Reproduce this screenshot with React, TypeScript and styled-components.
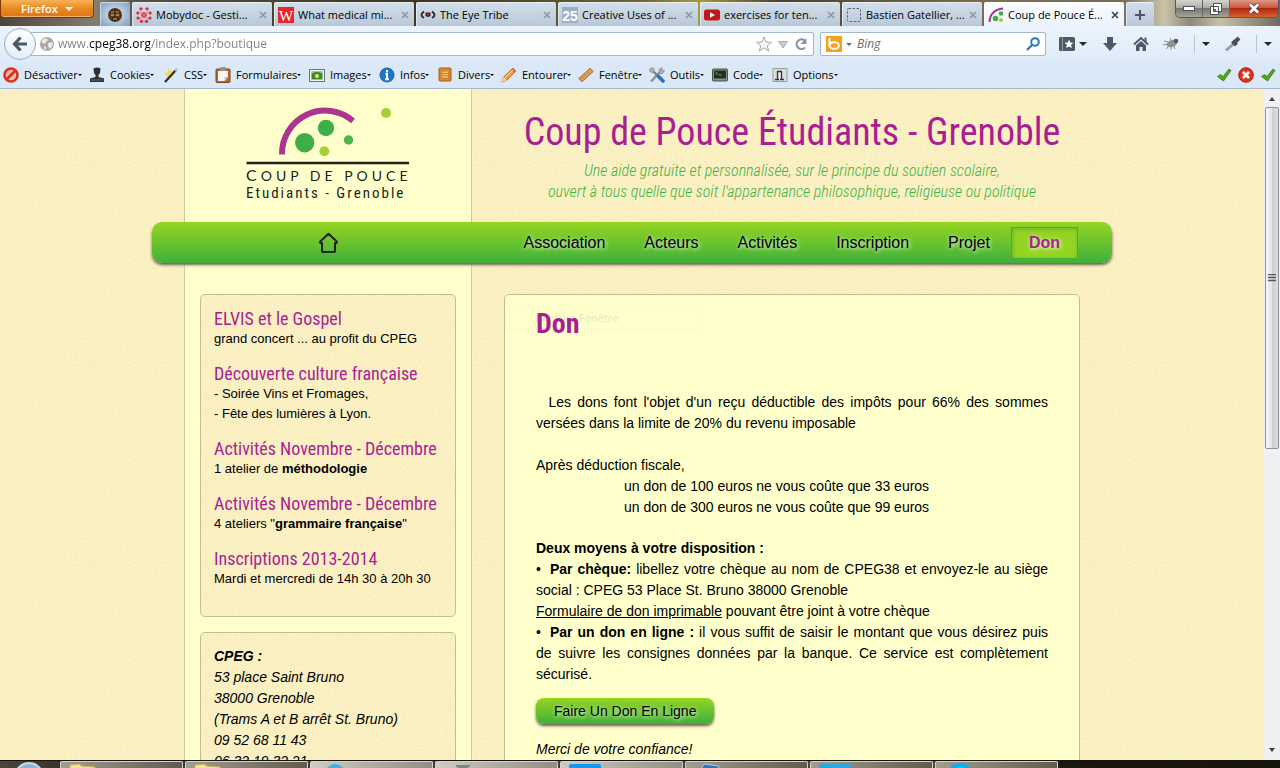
import React from "react";
import styled, { createGlobalStyle, css } from "styled-components";

const ui = `"Open Sans", "Noto Sans", sans-serif`;
const sans = `"Liberation Sans", Arial, sans-serif`;
const narrow = `"Roboto Condensed", "Open Sans Condensed", "DejaVu Sans Condensed", sans-serif`;

const grain = `url("data:image/svg+xml,%3Csvg xmlns='http://www.w3.org/2000/svg' width='200' height='200'%3E%3Cfilter id='n' x='0' y='0' width='100%25' height='100%25'%3E%3CfeTurbulence type='fractalNoise' baseFrequency='.55' numOctaves='2' stitchTiles='stitch'/%3E%3CfeColorMatrix values='0 0 0 0 .78 0 0 0 0 .68 0 0 0 0 .42 .6 0 0 0 -.18'/%3E%3C/filter%3E%3Crect width='200' height='200' filter='url(%23n)'/%3E%3C/svg%3E")`;

const paper = css`
  background-color: #fdf3c4;
  background-image: ${grain};
`;

const Global = createGlobalStyle`
  * { box-sizing: border-box; }
  body { margin: 0; font-family: ${sans}; color: #000; overflow: hidden; }
  button, input { font: inherit; color: inherit; margin: 0; padding: 0; border: 0; background: none; }
  h1, h2, h3, p, ul, address { margin: 0; padding: 0; }
  svg { display: block; flex: none; }
`;

const Window = styled.div`
  height: 100vh;
  display: flex;
  flex-direction: column;
  overflow: hidden;
`;

/* ---------- title bar and tabs ---------- */

const TitleBar = styled.div`
  height: 26px;
  flex: none;
  display: flex;
  align-items: flex-end;
  gap: 2px;
  font: 12px/16px ${ui};
  background: linear-gradient(90deg, #4c443b 0, #857d6e 96px, #58503f 140px, #3c3624 420px, #6c6533 640px, #a59c3f 700px, #4b4330 780px, #7a7250 1000px, #746a56 1120px, #c9c4a8 1164px, #8d8a7c 1190px, #c8c1a6 1220px, #6f6a60 1280px);
`;

const FirefoxButton = styled.button`
  align-self: flex-start;
  width: 94px;
  height: 18px;
  margin-right: 4px;
  display: flex;
  align-items: center;
  justify-content: center;
  gap: 7px;
  color: #fff;
  font-weight: 600;
  font-size: 11px;
  border: 1px solid #7a3a06;
  border-top: 0;
  border-radius: 0 0 4px 4px;
  background: linear-gradient(#f7b257, #e98a22 50%, #de7410);
  box-shadow: inset 0 -1px 0 #f2b06a;
`;

const Tab = styled.button<{ $active?: boolean; $pinned?: boolean }>`
  flex: 0 1 ${(p) => (p.$pinned ? "30px" : "140px")};
  min-width: 28px;
  height: 24px;
  display: flex;
  align-items: center;
  justify-content: ${(p) => (p.$pinned ? "center" : "flex-start")};
  gap: 4px;
  padding: 2px 5px 0 4px;
  text-align: left;
  white-space: nowrap;
  border-radius: 2px 2px 0 0;
  background: ${(p) =>
    p.$active ? "linear-gradient(#fbfdff, #eaf3fc)" : p.$pinned ? "radial-gradient(#d9e8f5, #7f9dbc)" : "linear-gradient(#d3dfeb, #b9c8d8)"};
  box-shadow: inset 1px 1px 0 rgba(255, 255, 255, 0.5);
`;

const TabLabel = styled.span`
  flex: 1;
  min-width: 0;
  overflow: hidden;
  font-size: 11px;
`;

const NewTab = styled(Tab)`
  flex: 0 0 26px;
  justify-content: center;
`;

const Caption = styled.div`
  align-self: flex-start;
  margin: 0 1px 0 auto;
  height: 18px;
  display: flex;
  border: 1px solid #56585a;
  border-top: 0;
  border-radius: 0 0 5px 5px;
  overflow: hidden;
`;

const CaptionButton = styled.button<{ $close?: boolean }>`
  width: ${(p) => (p.$close ? "48px" : "27px")};
  display: grid;
  place-items: center;
  border-right: ${(p) => (p.$close ? "0" : "1px solid #66686a")};
  background: ${(p) => (p.$close ? "linear-gradient(#dc9a86, #cc5237 48%, #b0270d 50%, #d5622f)" : "linear-gradient(#d5d4cf, #aaa9a2 48%, #77766f 50%, #a5a498)")};
`;

/* ---------- navigation bar ---------- */

const NavBar = styled.div`
  height: 36px;
  flex: none;
  display: flex;
  align-items: center;
  padding: 0 8px 0 4px;
  background: linear-gradient(#ebf4fd, #dfebf8);
`;

const BackButton = styled.button`
  width: 32px;
  height: 32px;
  margin-right: -6px;
  z-index: 1;
  display: grid;
  place-items: center;
  border: 1px solid #98aac3;
  border-radius: 50%;
  background: linear-gradient(#fff, #e2edf8);
`;

const Field = styled.label<{ $w?: string }>`
  flex: ${(p) => (p.$w ? `0 1 ${p.$w}` : "1")};
  height: 24px;
  min-width: 0;
  display: flex;
  align-items: center;
  gap: 4px;
  padding: 0 5px;
  border: 1px solid #a6b6ca;
  border-radius: 2px;
  background: #fff;
  font: 12px/16px ${ui};
`;

const UrlField = styled(Field)`
  margin-right: 6px;
  padding: 0 5px 0 9px;
`;

const UrlInput = styled.input`
  flex: 1;
  min-width: 0;
  outline: 0;
  font-size: 12px;
  -webkit-text-fill-color: transparent;
  background: linear-gradient(90deg, #808080 31px, #000 31px, #000 92px, #808080 92px);
  -webkit-background-clip: text;
  background-clip: text;
`;

const SearchInput = styled.input`
  flex: 1;
  min-width: 0;
  outline: 0;
  padding-left: 1px;
  font-size: 12px;
  &::placeholder { color: #6b6b6b; font-style: italic; opacity: 1; }
`;

const Tools = styled.div`
  flex: none;
  width: 226px;
  padding-left: 13px;
  display: flex;
  align-items: center;
  justify-content: space-between;
`;

const IconButton = styled.button`
  display: flex;
  align-items: center;
  gap: 4px;
`;

const Rule = styled.span`
  width: 1px;
  height: 18px;
  margin-right: 3px;
  background: #b6c5d6;
`;

/* ---------- developer toolbar ---------- */

const DevBar = styled.div`
  height: 27px;
  flex: none;
  display: flex;
  align-items: center;
  justify-content: space-between;
  padding: 0 4px 0 3px;
  font: 11px/16px ${ui};
  background: #dbe8f7;
  border-bottom: 1px solid #a5b8d2;
`;

const DevItems = styled.div`
  display: grid;
  grid-template-columns: 86px 74px 52px 94px 70px 58px 64px 77px 71px 63px 60px 70px;
`;

const DevItem = styled.button`
  display: flex;
  align-items: center;
  white-space: nowrap;
  svg:first-child { margin-right: 5px; }
`;

const Status = styled.div`
  display: flex;
  gap: 6px;
`;

/* ---------- viewport ---------- */

const Viewport = styled.div`
  flex: 1;
  min-height: 0;
  display: flex;
`;

const Page = styled.div`
  flex: 1;
  min-width: 0;
  overflow: hidden;
  ${paper}
`;

const Wrap = styled.div`
  width: 960px;
  max-width: 100%;
  margin: 0 auto;
`;

const Columns = styled.div`
  display: grid;
  grid-template-columns: 288px 1fr;
  column-gap: 32px;
  padding: 0 32px;
`;

const LeftStrip = styled.div`
  padding: 0 15px;
  background: #ffffcc;
  border: solid #cfcba4;
  border-width: 0 1px;
`;

const LogoStrip = styled(LeftStrip)`
  height: 133px;
  padding: 17px 0 0 59px;
`;

const Heading = styled.header`
  padding-top: 18px;
  text-align: center;
`;

const SiteTitle = styled.h1`
  font: 400 38px/50px ${narrow};
  color: #a91f92;
  white-space: nowrap;
`;

const Tagline = styled.p`
  padding-top: 3px;
  font: italic 300 16px/21px ${narrow};
  color: #3fb244;
  white-space: nowrap;
`;

const green = css`
  background: linear-gradient(#95d522, #3fb03a);
  box-shadow: 0 2px 3px #6b5c4c;
  text-shadow: 1px 1px 4px #fff;
`;

const Menu = styled.nav`
  position: relative;
  height: 41px;
  display: flex;
  align-items: center;
  padding: 0 34px 0 166px;
  border-radius: 10px;
  ${green}
`;

const MenuList = styled.ul`
  margin-left: auto;
  display: flex;
  gap: 3px;
  list-style: none;
`;

const MenuLink = styled.a<{ $active?: boolean }>`
  display: block;
  padding: 0 17px;
  font-size: 16px;
  line-height: 30px;
  color: #000;
  text-decoration: none;
  border: 1px solid transparent;
  ${(p) =>
    p.$active &&
    css`
      color: #a91f92;
      font-weight: bold;
      background: #95d522;
      border-color: #3fb03a;
      box-shadow: inset 1px 1px 5px #6fb030;
    `}
`;

const box = css`
  border: 1px solid #c3bd96;
  border-radius: 5px;
`;

const SideBox = styled.section`
  ${box}
  ${paper}
  padding: 13px;
  margin-bottom: 15px;
`;

const Sidebar = styled(LeftStrip)`
  padding-top: 31px;
`;

const News = styled.article`
  margin-bottom: 14px;
  font-size: 13px;
  line-height: 20px;
  white-space: nowrap;
`;

const NewsTitle = styled.h3`
  font: 400 18px/21px ${narrow};
  color: #a91f92;
`;

const Address = styled.address`
  font-size: 14px;
  line-height: 21px;
`;

const Main = styled.main`
  ${box}
  position: relative;
  margin-top: 31px;
  padding: 12px 31px 40px;
  background: #ffffcc;
  font-size: 14px;
  line-height: 21px;
`;

const MainTitle = styled.h2`
  position: relative;
  margin-bottom: 51px;
  font: bold 28px/34px ${narrow};
  color: #a91f92;
`;

const Ghost = styled.div`
  position: absolute;
  top: 11px;
  left: 0;
  width: 194px;
  padding-left: 29px;
  font: 11px/21px ${ui};
  color: #e8e8ba;
  border: 1px solid #fafac6;
`;

const Para = styled.p<{ $gap?: boolean }>`
  text-align: justify;
  margin-bottom: ${(p) => (p.$gap ? "21px" : "0")};
`;

const Sums = styled.p`
  padding-left: 88px;
  margin-bottom: 20px;
`;

const Bullet = styled.span`
  padding-right: 4px;
`;

const InkLink = styled.a`
  color: #000;
`;

const DonateButton = styled.button`
  display: block;
  height: 26px;
  margin: 13px 0 15px;
  padding: 0 18px;
  border-radius: 8px;
  font-size: 14px;
  white-space: nowrap;
  ${green}
`;

/* ---------- scroll bar and task bar ---------- */

const ScrollBar = styled.div`
  flex: none;
  width: 16px;
  display: flex;
  flex-direction: column;
  align-items: center;
  padding: 7px 0;
  background: #f0f0f2;
`;

const Thumb = styled.div`
  width: 14px;
  flex: 0 0 52%;
  margin: 5px 0 auto;
  display: grid;
  place-items: center;
  border: 1px solid #8f9399;
  border-radius: 2px;
  background: linear-gradient(90deg, #f6f6f7, #e4e5e8 48%, #cfd0d4 52%, #dcdde0);
`;

const TaskBar = styled.footer`
  flex: none;
  height: 8px;
  display: flex;
  gap: 2px;
  border-top: 1px solid #14130d;
  background: linear-gradient(90deg, #4b4638, #38342a 60px, #4d493c 1050px, #1b1811 1060px, #17140e);
  overflow: hidden;
`;

const Orb = styled.div`
  flex: none;
  width: 58px;
  display: grid;
  justify-content: center;
`;

const Task = styled.div<{ $dark?: boolean }>`
  flex: 0 1 123px;
  padding: 1px 0 0 8px;
  border: 1px solid #d6d3c8;
  border-bottom: 0;
  border-radius: 2px 2px 0 0;
  overflow: hidden;
  background: ${(p) => (p.$dark ? "linear-gradient(90deg, #a39d90, #625a4c)" : "linear-gradient(90deg, #cfccc2, #b0aca2 50%, #938e82)")};
`;

/* ---------- drawings ---------- */

const Svg = ({ w = 16, h = 16, vb, children }: { w?: number; h?: number; vb?: string; children: React.ReactNode }) => (
  <svg width={w} height={h} viewBox={vb || `0 0 ${w} ${h}`} aria-hidden="true">
    {children}
  </svg>
);

const Caret = ({ w = 8, c = "#1f2a36" }: { w?: number; c?: string }) => (
  <Svg w={w} h={w / 2} vb="0 0 8 4">
    <path d="M0 0h8L4 4z" fill={c} />
  </Svg>
);

const Cross = ({ c }: { c: string }) => (
  <Svg w={8} h={8}>
    <path d="M1 1l6 6M7 1L1 7" stroke={c} strokeWidth="1.7" />
  </Svg>
);

const favicons: Record<string, React.ReactNode> = {
  cookie: (
    <>
      <circle cx="8" cy="8" r="7" fill="#54351a" />
      <circle cx="8" cy="8" r="4.5" fill="#8a6033" />
      <path d="M3 6h10M4 10h8M8 2v12M5 3l1 3M11 3l-1 3M5 13l1-3M11 13l-1-3" stroke="#2c1a0c" />
      <path d="M4 5h3M9 5h3M4 8h3M9 8h3M6 12h4" stroke="#c79a5e" />
    </>
  ),
  moby: (
    <g fill="#e8262f">
      <circle cx="8" cy="8" r="2.8" />
      <path d="M8 8L3 4M8 8l5-4M8 8l-5 5M8 8l5 5" stroke="#f07a80" />
      <circle cx="5" cy="1.8" r="1.6" /><circle cx="11" cy="1.8" r="1.6" />
      <circle cx="1.8" cy="6" r="1.6" /><circle cx="14.2" cy="6" r="1.6" />
      <circle cx="2" cy="11" r="1.6" /><circle cx="14" cy="11" r="1.6" />
      <circle cx="5.5" cy="14.3" r="1.6" /><circle cx="10.5" cy="14.3" r="1.6" />
    </g>
  ),
  what: (
    <>
      <path d="M0 0h16v16H0z" fill="#e8252c" />
      <text x="8" y="13.5" textAnchor="middle" fontSize="15" fontFamily="Liberation Serif, serif" fill="#fff">W</text>
    </>
  ),
  eye: (
    <>
      <path d="M5.5 5.500h5v3q-2.500 3-5 0z" fill="#2b2b2b" />
      <circle cx="8" cy="7.500" r="1.100" fill="#d33" />
      <path d="M4 4.500Q-1 8 4 11M12 4.500Q17 8 12 11" fill="none" stroke="#2b2b2b" strokeWidth="1.900" />
    </>
  ),
  n25: (
    <>
      <path d="M0 0h16v16H0z" fill="#9cafc7" />
      <text x="8" y="13.5" textAnchor="middle" fontSize="14" fontWeight="bold" fontFamily="Liberation Sans, sans-serif" fill="#fff">25</text>
    </>
  ),
  tube: (
    <>
      <rect y="2.5" width="16" height="11" rx="2.5" fill="#c4161c" />
      <path d="M6 5.200v5.600L11 8z" fill="#fff" />
    </>
  ),
  blank: <rect x="1.5" y="1.5" width="13" height="13" rx="1" fill="none" stroke="#59646f" strokeDasharray="2.5 1.5" />,
  coup: (
    <>
      <path d="M1.500 15Q2 3 15 1.500" fill="none" stroke="#a9338f" strokeWidth="2" />
      <circle cx="7.5" cy="11.500" r="2.800" fill="#3fae49" /><circle cx="13" cy="6.500" r="2.300" fill="#3fae49" />
      <circle cx="13" cy="13" r="2" fill="#a4cf38" />
    </>
  ),
};

const devIcons: Record<string, React.ReactNode> = {
  disable: (
    <>
      <circle cx="8" cy="8" r="6.500" fill="#f7b9ac" stroke="#d8321c" strokeWidth="2.600" />
      <path d="M3.500 12.500l9-9" stroke="#d8321c" strokeWidth="2.800" />
    </>
  ),
  user: (
    <>
      <path d="M4.500 1.500Q8-.500 11.500 1.500L11 6 9.500 8v2l5.500 1.500V15H1v-3.500L6.500 10V8L5 6z" fill="#2e3133" />
      <path d="M2 13h12" stroke="#6a6e70" />
    </>
  ),
  wand: (
    <>
      <path d="M6 0l1.500 4L12 3.500 9 7l2 4-4-1.500L4 13V8.500L0 6.500l4.500-1z" fill="#ffd84a" />
      <path d="M2 15L13 3" stroke="#333" strokeWidth="2.300" />
      <path d="M12 4l2-2" stroke="#bbb" strokeWidth="2" />
    </>
  ),
  clip: (
    <>
      <rect x="1" y="2" width="14" height="13.500" rx="1" fill="#b5682a" stroke="#80451a" />
      <path d="M3 4h10v6l-3.500 4H3z" fill="#f8f7f2" />
      <path d="M13 10H9.500v4z" fill="#c9c4b8" />
      <rect x="5" y="0" width="6" height="4" rx="1" fill="#8e9092" />
    </>
  ),
  image: (
    <>
      <rect x=".5" y="2.500" width="15" height="12" fill="#f4f4ef" stroke="#6f756d" />
      <path d="M2.500 4.500h11v8h-11z" fill="#3f8a2b" />
      <path d="M2.500 6.500Q8 3 13.500 6.500v-2h-11z" fill="#a7cfe0" />
      <circle cx="8" cy="9" r="2" fill="#e9e46c" />
    </>
  ),
  info: (
    <>
      <circle cx="8" cy="8" r="7" fill="#1c78c4" stroke="#1260a5" />
      <path d="M8 3v2.500M6.500 7H8v5M6 12.300h4" stroke="#fff" strokeWidth="2" fill="none" />
    </>
  ),
  misc: (
    <>
      <rect x="2" y="1" width="12" height="13" rx="1" fill="#d98a2b" stroke="#a45d12" />
      <path d="M4.500 4h7v7h-7zM4.500 6.500h7M4.500 8.500h7" fill="#f4bd6c" stroke="#c98436" />
    </>
  ),
  pencil: (
    <>
      <path d="M1 15l1.500-5L12 1l3 3-9.500 9.500z" fill="#f19a38" stroke="#b4631a" strokeWidth=".8" />
      <path d="M12 1l3 3-2 2-3-3z" fill="#d66" />
      <path d="M4 11l8-8" stroke="#ffdc9c" />
      <path d="M1 15l1.500-5 3 3.500z" fill="#f5deb5" />
    </>
  ),
  ruler: (
    <>
      <path d="M.8 11.500L12 1.200l3.200 3.300L4 14.800z" fill="#dd9a55" stroke="#a9642a" strokeWidth=".9" />
      <path d="M3 10l1.500 1.500M6 7.200l1.500 1.500M9 4.500L10.500 6" stroke="#c07c40" />
    </>
  ),
  tools: (
    <>
      <path d="M2 14.500L12 4" stroke="#8b9094" strokeWidth="2.400" />
      <path d="M10 2.500l3-2v3l2.500 0-2 3h-3z" fill="#aeb3b6" stroke="#777" strokeWidth=".6" />
      <path d="M4 4l5 5" stroke="#777c80" strokeWidth="2.200" />
      <path d="M1 1.500L4.500.8 5.500 4 4 5.800.8 4.500z" fill="#aeb3b6" stroke="#777" strokeWidth=".6" />
      <path d="M9.500 9.500l4.500 4.500" stroke="#2e70bd" strokeWidth="3.600" strokeLinecap="round" />
    </>
  ),
  code: (
    <>
      <rect x=".5" y="2" width="15" height="12" rx="1" fill="#8a938b" stroke="#4a504b" />
      <path d="M2 3.500h12v8H2z" fill="#1d3322" />
      <path d="M3.500 5l2 1.500-2 1M6.500 8h3" stroke="#6f9f70" fill="none" />
    </>
  ),
  options: (
    <>
      <path d="M1 1.500h14v13H1z" fill="#dededc" stroke="#9a9a98" />
      <path d="M5.500 12V4.500h4V12M3 12.500h4M8 12.500h4" fill="none" stroke="#333" strokeWidth="1.300" />
      <path d="M7.500 6v5" stroke="#fff" />
    </>
  ),
};

const Check = () => (
  <Svg>
    <path d="M1.500 9.500l3-2 2.500 2L13 2l2 1.500L7.500 14z" fill="#55a51c" stroke="#2c6d0a" strokeWidth=".7" />
  </Svg>
);

const Logo = () => (
  <svg width="168" height="96" viewBox="0 0 168 96" role="img" aria-label="Coup de pouce">
    <path d="M38 48.500A43 43 0 0 1 109 15" fill="none" stroke="#ab348f" strokeWidth="6" />
    <circle cx="60.700" cy="36.700" r="9.700" fill="#3fae49" />
    <circle cx="82" cy="22" r="8.200" fill="#3fae49" />
    <circle cx="104.500" cy="34" r="4.700" fill="#4cb648" />
    <circle cx="80.300" cy="45.200" r="4.900" fill="#a4cf38" />
    <circle cx="142" cy="7" r="5" fill="#a4cf38" />
    <path d="M2.500 57H165" stroke="#231f20" strokeWidth="2.700" />
    <text x="2" y="75" fontFamily="Lato, sans-serif" fontSize="14" letterSpacing="4" fill="#231f20">
      <tspan fontSize="16">C</tspan>OUP DE POUCE
    </text>
    <text x="2" y="92" fontFamily="Roboto Condensed, Open Sans Condensed, sans-serif" fontSize="15" letterSpacing="2" fill="#231f20">
      Etudiants - Grenoble
    </text>
  </svg>
);

/* ---------- data ---------- */

const tabs = [
  ["moby", "Mobydoc - Gesti..."],
  ["what", "What medical mi..."],
  ["eye", "The Eye Tribe"],
  ["n25", "Creative Uses of ..."],
  ["tube", "exercises for ten..."],
  ["blank", "Bastien Gatellier, ..."],
  ["coup", "Coup de Pouce É..."],
];

const devItems = [
  ["disable", "Désactiver"],
  ["user", "Cookies"],
  ["wand", "CSS"],
  ["clip", "Formulaires"],
  ["image", "Images"],
  ["info", "Infos"],
  ["misc", "Divers"],
  ["pencil", "Entourer"],
  ["ruler", "Fenêtre"],
  ["tools", "Outils"],
  ["code", "Code"],
  ["options", "Options"],
];

const news: [string, React.ReactNode][] = [
  ["ELVIS et le Gospel", "grand concert ... au profit du CPEG"],
  ["Découverte culture française", <>- Soirée Vins et Fromages,<br />- Fête des lumières à Lyon.</>],
  ["Activités Novembre - Décembre", <>1 atelier de <b>méthodologie</b></>],
  ["Activités Novembre - Décembre", <>4 ateliers "<b>grammaire française</b>"</>],
  ["Inscriptions 2013-2014", "Mardi et mercredi de 14h 30 à 20h 30"],
];

const folder = <path d="M1 2l10-1 1 2 14 1v8H1z" fill="#f3e3a0" stroke="#c9b062" />;

const tasks: [boolean, React.ReactNode][] = [
  [true, folder],
  [true, folder],
  [false, <circle cx="16" cy="11" r="10" fill="#3fb0e8" />],
  [false, <path d="M12 3h14M14 5h10" stroke="#76888c" strokeWidth="2" />],
  [false, <rect x="0" y="1" width="32" height="12" rx="2" fill="#1398ee" />],
  [true, <path d="M6 8L10 1l14 2 4 8z" fill="#2f74b5" stroke="#a9d1ee" />],
  [true, <rect x="0" y="1" width="32" height="12" rx="2" fill="#2ba8e4" />],
  [true, <circle cx="16" cy="13" r="13" fill="#07aef0" />],
];

const slate = "#4d5967";

export default function App() {
  return (
    <Window>
      <Global />
      <TitleBar>
        <FirefoxButton>Firefox <Caret c="#fff" /></FirefoxButton>
        <Tab $pinned aria-label="Cookie"><Svg>{favicons.cookie}</Svg></Tab>
        {tabs.map(([icon, label], i) => (
          <Tab key={label} $active={i === 6}>
            <Svg>{favicons[icon]}</Svg>
            <TabLabel>{label}</TabLabel>
            <Cross c={i === 6 ? "#3c4450" : "#8b97a4"} />
          </Tab>
        ))}
        <NewTab aria-label="Nouvel onglet">
          <Svg w={10} h={10}><path d="M5 0v10M0 5h10" stroke="#4a5561" strokeWidth="2" /></Svg>
        </NewTab>
        <Caption>
          <CaptionButton aria-label="Réduire">
            <Svg w={12} h={5}><rect x=".5" y=".5" width="11" height="4" fill="#fff" stroke="#4e5056" /></Svg>
          </CaptionButton>
          <CaptionButton aria-label="Restaurer">
            <Svg w={12} h={12}>
              <path d="M3.500.500h8v8h-8zM.500 3.500h8v8h-8z" fill="#fff" stroke="#4e5056" />
              <path d="M3.500 6.500h2v2h-2z" fill="#999" stroke="#4e5056" />
            </Svg>
          </CaptionButton>
          <CaptionButton $close aria-label="Fermer">
            <Svg w={12} h={11}>
              <path d="M2 1.500l8 8M10 1.500l-8 8" stroke="#5a4348" strokeWidth="4.500" />
              <path d="M2 1.500l8 8M10 1.500l-8 8" stroke="#fff" strokeWidth="2.600" />
            </Svg>
          </CaptionButton>
        </Caption>
      </TitleBar>

      <NavBar>
        <BackButton aria-label="Précédent">
          <Svg><path d="M8.500 1.500L2.500 8l6 6.500M3 8h12" fill="none" stroke={slate} strokeWidth="3.200" /></Svg>
        </BackButton>
        <UrlField>
          <Svg w={14} h={14}>
            <circle cx="7" cy="7" r="7" fill="#a9a9a9" />
            <path d="M2 3l4-2 2 2-2 2-1 2-3-1zM8 6l4-1 1 3-3 4-2-3zM4 9l2 1v3l-2-1z" fill="#e9e9e9" />
          </Svg>
          <UrlInput aria-label="Adresse" defaultValue="www.cpeg38.org/index.php?boutique" />
          <Svg><path d="M8 1l2 5 5.500.300-4.200 3.500 1.400 5.200L8 12l-4.700 3 1.400-5.200L.5 6.300 6 6z" fill="#f4f4f4" stroke="#a3a8ad" /></Svg>
          <Svg w={14} h={16}><path d="M2.500 5.500h9L7 12z" fill="#c6cedb" stroke="#a3adbd" /></Svg>
          <Svg w={14} h={14}>
            <path d="M11 10.500A4.800 4.800 0 1 1 10.500 3.500" fill="none" stroke="#8995a5" strokeWidth="2.200" />
            <path d="M12.500 1v6h-6z" fill="#8995a5" />
          </Svg>
        </UrlField>
        <Field $w="226px">
          <Svg>
            <path d="M0 0h16v16H0z" fill="#f7a01b" />
            <path d="M3.500 2v8" stroke="#fff" strokeWidth="2" />
            <ellipse cx="8.200" cy="9.500" rx="4.700" ry="3.300" fill="none" stroke="#fff" strokeWidth="2" />
          </Svg>
          <Caret w={6} c="#6b6b6b" />
          <SearchInput aria-label="Recherche" placeholder="Bing" />
          <Svg w={14} h={14}>
            <circle cx="9" cy="5" r="3.800" fill="none" stroke="#2f78bf" strokeWidth="2" />
            <path d="M6 8l-5 5" stroke="#2f78bf" strokeWidth="2.400" />
          </Svg>
        </Field>
        <Tools>
          <IconButton aria-label="Marque-pages">
            <Svg>
              <rect y="1" width="16" height="14" rx="1.500" fill={slate} />
              <path d="M3.500 1v14" stroke="#8c99a8" />
              <path d="M10 3.500l1.300 2.900 3.200.3-2.400 2.100.7 3.200L10 10.400 7.200 12l.7-3.200-2.400-2.100 3.200-.3z" fill="#fff" />
            </Svg>
            <Caret />
          </IconButton>
          <IconButton aria-label="Téléchargements">
            <Svg><path d="M5 1h6v6h4l-7 8-7-8h4z" fill={slate} /></Svg>
          </IconButton>
          <IconButton aria-label="Accueil">
            <Svg>
              <path d="M1 8.500l7-6.500 7 6.500" fill="none" stroke={slate} strokeWidth="2" />
              <path d="M3 9.500L8 5l5 4.500V15H9.500v-4h-3v4H3zM11.500 1.500h2V6h-2z" fill={slate} />
            </Svg>
          </IconButton>
          <IconButton aria-label="Firebug">
            <Svg>
              <ellipse cx="9" cy="7.500" rx="5.500" ry="3.500" fill="#8f9293" transform="rotate(-20 9 7.500)" />
              <circle cx="13" cy="5" r="2.300" fill="#55585a" />
              <path d="M1 5l4 1M0 9l4-1M3 13l3-3M8 14v-4M12 13l-1-3M7 2l1 3" stroke="#8f9293" />
            </Svg>
          </IconButton>
          <IconButton aria-label="Menu Firebug"><Rule /><Caret /></IconButton>
          <IconButton aria-label="Pipette">
            <Svg>
              <path d="M1 14.500L9.500 7" stroke="#9a9d9f" strokeWidth="3" />
              <path d="M7.500 5l4 4M10 6l4-4" stroke="#4b4e50" strokeWidth="4" />
            </Svg>
          </IconButton>
          <IconButton aria-label="Menu pipette"><Rule /><Caret /></IconButton>
        </Tools>
      </NavBar>

      <DevBar>
        <DevItems>
          {devItems.map(([icon, label]) => (
            <DevItem key={label}>
              <Svg>{devIcons[icon]}</Svg>
              {label}
              <Caret w={4} c="#000" />
            </DevItem>
          ))}
        </DevItems>
        <Status>
          <Check />
          <Svg>
            <circle cx="8" cy="8" r="7.300" fill="#e0301e" stroke="#b51c10" />
            <path d="M5 5l6 6M11 5l-6 6" stroke="#fff" strokeWidth="2.600" />
          </Svg>
          <Check />
        </Status>
      </DevBar>

      <Viewport>
        <Page>
          <Wrap>
            <Columns>
              <LogoStrip><Logo /></LogoStrip>
              <Heading>
                <SiteTitle>Coup de Pouce Étudiants - Grenoble</SiteTitle>
                <Tagline>
                  Une aide gratuite et personnalisée, sur le principe du soutien scolaire,
                  <br />
                  ouvert à tous quelle que soit l'appartenance philosophique, religieuse ou politique
                </Tagline>
              </Heading>
            </Columns>
            <Menu>
              <a href="#accueil" aria-label="Accueil">
                <Svg w={21} h={22}>
                  <path d="M4 11H2.200V9.500L10.500 1.800l8.300 7.700V11H17v8q0 1-1 1H5q-1 0-1-1z" fill="none" stroke="#222" strokeWidth="2" strokeLinejoin="round" />
                </Svg>
              </a>
              <MenuList>
                {["Association", "Acteurs", "Activités", "Inscription", "Projet", "Don"].map((m) => (
                  <li key={m}><MenuLink href={`#${m}`} $active={m === "Don"}>{m}</MenuLink></li>
                ))}
              </MenuList>
            </Menu>
            <Columns>
              <Sidebar>
                <SideBox>
                  {news.map(([title, body], i) => (
                    <News key={i}>
                      <NewsTitle>{title}</NewsTitle>
                      {body}
                    </News>
                  ))}
                </SideBox>
                <SideBox>
                  <Address>
                    <b>CPEG :</b><br />
                    53 place Saint Bruno<br />
                    38000 Grenoble<br />
                    (Trams A et B arrêt St. Bruno)<br />
                    09 52 68 11 43<br />
                    06 32 19 32 21
                  </Address>
                </SideBox>
              </Sidebar>
              <Main>
                <Ghost>Capture Fenêtre</Ghost>
                <MainTitle>Don</MainTitle>
                <Para $gap>
                  &nbsp; Les dons font l'objet d'un reçu déductible des impôts pour 66% des sommes versées dans la limite de 20% du revenu imposable
                </Para>
                <Para>Après déduction fiscale,</Para>
                <Sums>
                  un don de 100 euros ne vous coûte que 33 euros<br />
                  un don de 300 euros ne vous coûte que 99 euros
                </Sums>
                <Para><b>Deux moyens à votre disposition :</b></Para>
                <Para>
                  <Bullet>•</Bullet> <b>Par chèque:</b> libellez votre chèque au nom de CPEG38 et envoyez-le au siège social : CPEG 53 Place St. Bruno 38000 Grenoble
                </Para>
                <Para><InkLink href="#formulaire">Formulaire de don imprimable</InkLink> pouvant être joint à votre chèque</Para>
                <Para>
                  <Bullet>•</Bullet> <b>Par un don en ligne :</b> il vous suffit de saisir le montant que vous désirez puis de suivre les consignes données par la banque. Ce service est complètement sécurisé.
                </Para>
                <DonateButton>Faire Un Don En Ligne</DonateButton>
                <Para><i>Merci de votre confiance!</i></Para>
              </Main>
            </Columns>
          </Wrap>
        </Page>
        <ScrollBar>
          <Svg w={8} h={6}><path d="M1 5h6L4 1z" fill="#3c3c3c" /></Svg>
          <Thumb><Svg w={8} h={8}><path d="M0 .5h8M0 3.500h8M0 6.500h8" stroke="#55585e" strokeWidth="1.500" /></Svg></Thumb>
          <Svg w={8} h={6}><path d="M1 1h6L4 5z" fill="#3c3c3c" /></Svg>
        </ScrollBar>
      </Viewport>

      <TaskBar>
        <Orb><Svg w={30} h={20}><circle cx="15" cy="16" r="14" fill="#8fb6d4" stroke="#c9dbe8" strokeWidth="2" /></Svg></Orb>
        {tasks.map(([dark, icon], i) => (
          <Task key={i} $dark={dark}><Svg w={32} h={14}>{icon}</Svg></Task>
        ))}
      </TaskBar>
    </Window>
  );
}
